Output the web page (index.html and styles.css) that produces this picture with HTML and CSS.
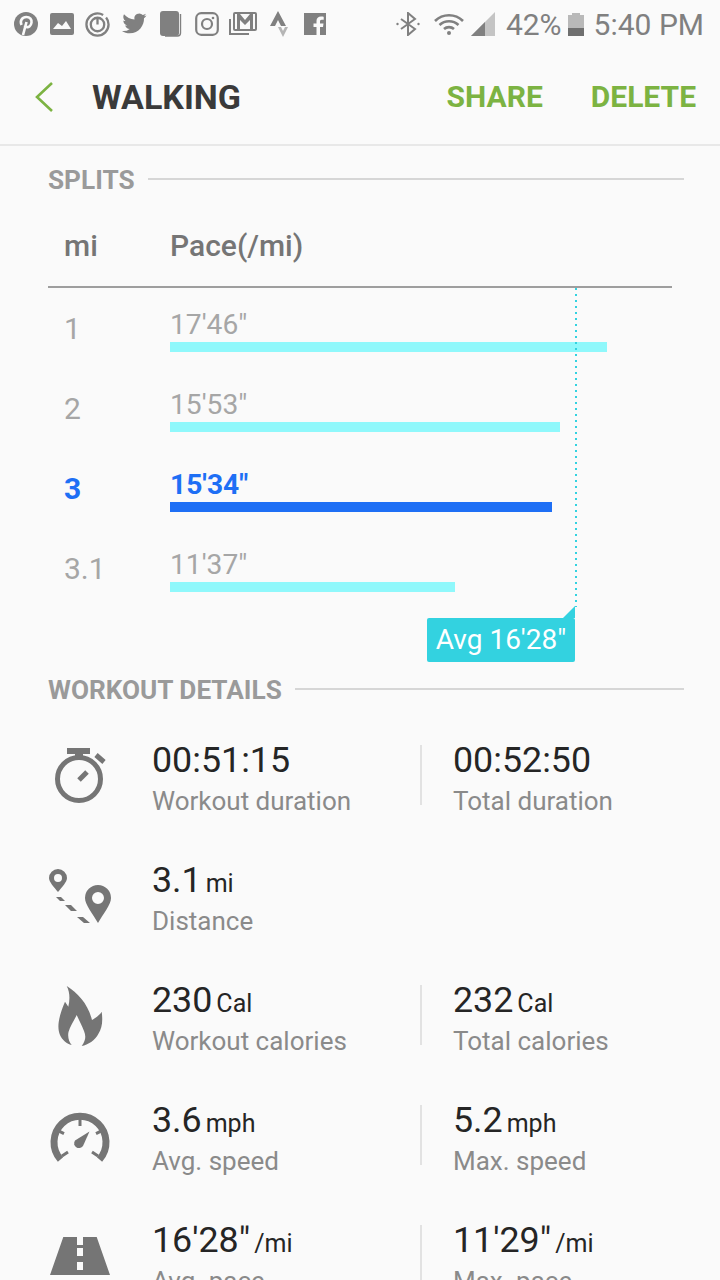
FILE: index.html
```html
<!DOCTYPE html>
<html lang="en">
  <head>
    <meta charset="UTF-8" />
    <meta name="viewport" content="width=device-width, initial-scale=1.0" />
    <title>Walking</title>
    <link rel="stylesheet" href="styles.css">
  </head>
  <body>
    <div class="status-bar">
      <div class="status-apps">
        <svg width="24" height="24" viewBox="0 0 24 24"><circle cx="12" cy="12" r="12" fill="#808080"/><path d="M9 23l3.500-13M7.500 13C5.500 8.500 8.500 5 12.300 5c3.700 0 5.700 2.500 5.200 5.600-.5 3.200-2.800 5-5 4.400-1-.3-1.600-.9-1.900-1.500" fill="none" stroke="#fafafa" stroke-width="2.600"/></svg>
        <svg width="24" height="24" viewBox="0 0 24 24"><rect y="1" width="24" height="22" rx="2" fill="#808080"/><path d="M3 17l5-6 4 3 4-5 5 8z" fill="#fafafa"/></svg>
        <svg width="25" height="25" viewBox="0 0 26 26"><circle cx="13" cy="13" r="11.500" fill="none" stroke="#808080" stroke-width="2.400" stroke-dasharray="60 4"/><circle cx="13" cy="13" r="7" fill="none" stroke="#808080" stroke-width="2.400"/><path d="M13 6v7" stroke="#808080" stroke-width="2.400"/></svg>
        <svg width="26" height="24" viewBox="0 0 26 24"><path d="M25.500 3.500c-.9.500-1.900.7-2.700.8 1-.6 1.700-1.500 2-2.500-1 .6-2 1-3 1.200A4.900 4.900 0 0 0 13.500 7.500C9.500 7.300 5.600 5.300 3 2.200 1.600 4.500 2.300 7.500 4.500 9c-.8 0-1.500-.2-2.200-.6 0 2.400 1.700 4.500 4 5-.7.200-1.500.2-2.200.1.600 2 2.500 3.400 4.600 3.400A10 10 0 0 1 1 19c2.200 1.400 4.900 2.300 7.700 2.300 9.300 0 14.600-7.900 14.300-15 1-.7 1.800-1.600 2.500-2.800z" fill="#808080"/></svg>
        <svg width="22" height="26" viewBox="0 0 22 26"><rect x="0" y="0" width="19" height="25" rx="3" fill="#808080"/><path d="M20.500 3v19q0 3-3 3H5" fill="none" stroke="#808080" stroke-width="1.400"/></svg>
        <svg width="24" height="24" viewBox="0 0 24 24"><rect x="1.200" y="1.200" width="21.600" height="21.600" rx="5" fill="none" stroke="#808080" stroke-width="2.200"/><circle cx="12" cy="12" r="5" fill="none" stroke="#808080" stroke-width="2.200"/><circle cx="18" cy="6" r="1.300" fill="#808080"/></svg>
        <svg width="28" height="24" viewBox="0 0 28 24"><rect x="5" y="1" width="22" height="17" rx="1" fill="none" stroke="#808080" stroke-width="2"/><path d="M1 7v15h19" fill="none" stroke="#808080" stroke-width="2"/><path d="M8 2v15h3V8l5 5 5-5v9h3V2h-3l-5 6-5-6z" fill="#808080"/></svg>
        <svg width="18" height="26" viewBox="0 0 18 26"><path d="M8 0l8 15h-5L8 9l-3 6H0z" fill="#808080"/><path d="M8 16h3l2 4 2-4h3l-5 10z" fill="#b5b5b5"/></svg>
        <svg width="22" height="22" viewBox="0 0 22 22"><path d="M0 0h22v22h-6v-8h3l.5-3.500H16V8.500c0-1 .4-1.700 1.700-1.700h2V3.700c-.4 0-1.500-.2-2.700-.2-2.700 0-4.500 1.600-4.500 4.600v2.400H9.500V14h3v8H0z" fill="#808080"/></svg>
      </div>
      <div class="status-right">
        <svg width="24" height="24" viewBox="0 0 24 24" class="s-bt"><path d="M5 7l14 10-7 6V1l7 6L5 17" fill="none" stroke="#808080" stroke-width="2"/><circle cx="1.500" cy="12" r="1.200" fill="#808080"/><circle cx="22.500" cy="12" r="1.200" fill="#808080"/></svg>
        <svg width="30" height="24" viewBox="0 0 30 24" class="s-wifi"><path d="M1 9a20 20 0 0 1 28 0M5.500 13a14 14 0 0 1 19 0M10 17a7.500 7.500 0 0 1 10 0" fill="none" stroke="#808080" stroke-width="2.600"/><circle cx="15" cy="21" r="2" fill="#808080"/></svg>
        <svg width="24" height="24" viewBox="0 0 24 24" class="s-signal"><path d="M24 0v24H0z" fill="#c4c4c4"/><path d="M14 10v14H0z" fill="#808080"/></svg>
        <span>42%</span>
        <span class="s-batt"><span class="s-batt-level"></span></span>
        <span>5:40 PM</span>
      </div>
    </div>

    <div class="top-bar">
      <svg class="back" width="20" height="32" viewBox="0 0 20 32"><path d="M19 2L4 16l15 14" fill="none" stroke="#7cb342" stroke-width="2.600"/></svg>
      <h1>WALKING</h1>
      <a class="action action-share">SHARE</a>
      <a class="action">DELETE</a>
    </div>

    <div class="section-head head-splits"><span>SPLITS</span><i></i></div>

    <div class="splits">
      <div class="splits-head"><span class="col-mi">mi</span><span>Pace(/mi)</span></div>

      <div class="split">
        <span class="col-mi">1</span>
        <div class="split-pace"><span>17'46"</span><div class="bar" style="width: 437px"></div></div>
      </div>
      <div class="split">
        <span class="col-mi">2</span>
        <div class="split-pace"><span>15'53"</span><div class="bar" style="width: 390px"></div></div>
      </div>
      <div class="split split-active">
        <span class="col-mi">3</span>
        <div class="split-pace"><span>15'34"</span><div class="bar" style="width: 382px"></div></div>
      </div>
      <div class="split">
        <span class="col-mi">3.1</span>
        <div class="split-pace"><span>11'37"</span><div class="bar" style="width: 285px"></div></div>
      </div>

      <div class="avg-line"></div>
      <div class="avg-tag">Avg 16'28"</div>
    </div>

    <div class="section-head"><span>WORKOUT DETAILS</span><i></i></div>

    <div class="details">
      <div class="detail">
        <div class="detail-icon">
          <svg width="60" height="60" viewBox="0 0 60 60"><path d="M19 2h23v6h-7v4h-8V8h-8z" fill="#757575"/><circle cx="31" cy="33" r="21.500" fill="none" stroke="#757575" stroke-width="5"/><path d="M48 9l8 7M31 34l8-8" fill="none" stroke="#757575" stroke-width="5"/></svg>
        </div>
        <div class="cell">
          <div class="value">00:51:15</div>
          <div class="label">Workout duration</div>
        </div>
        <div class="cell cell-second">
          <div class="value">00:52:50</div>
          <div class="label">Total duration</div>
        </div>
      </div>

      <div class="detail">
        <div class="detail-icon">
          <svg width="70" height="60" viewBox="0 0 70 60"><path fill-rule="evenodd" d="M10 3a9 9 0 0 1 9 9c0 4-5 9-9 14-4-5-9-10-9-14a9 9 0 0 1 9-9zm0 5a4 4 0 1 0 0 8 4 4 0 0 0 0-8z" fill="#757575"/><path fill-rule="evenodd" d="M50 19a13 13 0 0 1 13 13c0 7-8 16-13 25-5-9-13-18-13-25a13 13 0 0 1 13-13zm0 7a6 6 0 1 0 0 12 6 6 0 0 0 0-12z" fill="#757575"/><path d="M8 31h5l4 4h-5zM17 39h6l6 6h-6zM29 51h6l7 6h-6z" fill="#757575"/></svg>
        </div>
        <div class="cell">
          <div class="value">3.1<small>mi</small></div>
          <div class="label">Distance</div>
        </div>
      </div>

      <div class="detail">
        <div class="detail-icon">
          <svg width="60" height="72" viewBox="0 0 60 72"><path d="M18.700 6C30 13 40 24 44 40c3-2 8-5 9.700-8.300C55 42 54 48 50.300 54c-3 6-10.300 11-16.600 12 4.300-6 4.300-10 2.300-15-2-5-5-11-7.300-16-2.700 6-6.700 11-8.200 17-1 5 .5 10 3.200 13-4.700-1-9.700-5-11.700-10-3-7-2-17 5-33.300l3.300 5C22 20 22 12 18.700 6z" fill="#757575"/></svg>
        </div>
        <div class="cell">
          <div class="value">230<small>Cal</small></div>
          <div class="label">Workout calories</div>
        </div>
        <div class="cell cell-second">
          <div class="value">232<small>Cal</small></div>
          <div class="label">Total calories</div>
        </div>
      </div>

      <div class="detail">
        <div class="detail-icon">
          <svg width="64" height="60" viewBox="0 0 64 60"><path d="M12.500 53.500A26 26 0 1 1 51.500 53.500" fill="none" stroke="#757575" stroke-width="7"/><path d="M32 13v7M10 24.700l6 3M54 24.700l-6 3M14 50l6-4M50 50l-6-4" fill="none" stroke="#757575" stroke-width="3"/><path d="M41.500 25.500L35 40a4.800 4.800 0 0 1-8-5.500z" fill="#757575"/></svg>
        </div>
        <div class="cell">
          <div class="value">3.6<small>mph</small></div>
          <div class="label">Avg. speed</div>
        </div>
        <div class="cell cell-second">
          <div class="value">5.2<small>mph</small></div>
          <div class="label">Max. speed</div>
        </div>
      </div>

      <div class="detail">
        <div class="detail-icon">
          <svg width="64" height="40" viewBox="0 0 64 40"><path fill-rule="evenodd" d="M15.300 1H29v8h6V1h13.700L62 39H2zM29 12v8h6v-8zm0 14v8h6v-8z" fill="#757575"/></svg>
        </div>
        <div class="cell">
          <div class="value">16'28"<small>/mi</small></div>
          <div class="label">Avg. pace</div>
        </div>
        <div class="cell cell-second">
          <div class="value">11'29"<small>/mi</small></div>
          <div class="label">Max. pace</div>
        </div>
      </div>
    </div>
  </body>
</html>
```

FILE: styles.css
```css
/* General */
html,
body {
  height: 1280px;
  overflow: hidden;
}

body {
  margin: 0;
  background-color: #fafafa;
  font-family: Roboto, "Liberation Sans", sans-serif;
  color: #252525;
}

/* Status bar */
.status-bar {
  height: 48px;
  display: flex;
  align-items: center;
  justify-content: space-between;
  padding: 0 16px 0 14px;
  color: #808080;
}

.status-apps {
  display: flex;
  align-items: center;
  gap: 11px;
}

.status-apps svg:nth-child(2) {
  margin-left: 1px;
}

.status-apps svg:nth-child(5),
.status-apps svg:nth-child(6),
.status-apps svg:nth-child(8) {
  margin-left: 2px;
}

.status-apps svg:nth-child(7) {
  margin-left: -1px;
}

.status-apps svg:nth-child(9) {
  margin-left: 5px;
}

.status-right {
  display: flex;
  align-items: center;
  font-size: 30px;
}

.s-bt {
  margin-right: 14px;
}

.s-wifi {
  margin-right: 7px;
}

.s-signal {
  margin-right: 11px;
}

.s-batt {
  position: relative;
  width: 16px;
  height: 21px;
  margin: 3px 10px 0 6px;
  background: #b9b9b9;
  display: flex;
  align-items: flex-end;
}

.s-batt::before {
  content: "";
  position: absolute;
  left: 4px;
  top: -2px;
  width: 8px;
  height: 2px;
  background: #b9b9b9;
}

.s-batt-level {
  width: 100%;
  height: 8px;
  background: #6f6f6f;
}

/* Top bar */
.top-bar {
  height: 98px;
  box-sizing: border-box;
  display: flex;
  align-items: center;
  padding: 2px 24px 0 33px;
  border-bottom: 2px solid #e8e8e8;
}

.top-bar h1 {
  margin: 0 0 0 39px;
  font-size: 34px;
  font-weight: 700;
  color: #3a3a3a;
  flex: 1;
}

.action {
  font-size: 30px;
  font-weight: 700;
  color: #7cb342;
  margin-bottom: 2px;
}

.action-share {
  margin-right: 48px;
}

/* Section headings */
.section-head {
  display: flex;
  align-items: center;
  gap: 13px;
  height: 32px;
  margin: 0 36px 0 48px;
  font-size: 26.2px;
  font-weight: 700;
  color: #9a9a9a;
}

.section-head i {
  flex: 1;
  height: 2px;
  margin-bottom: 2px;
  background: #d6d6d6;
}

.head-splits {
  margin-top: 18px;
}

/* Splits */
.splits {
  position: relative;
  margin: 0 48px;
  height: 478px;
}

.splits-head {
  height: 92px;
  box-sizing: border-box;
  padding-top: 32px;
  line-height: 36px;
  display: flex;
  font-size: 30px;
  font-weight: 500;
  color: #757575;
  border-bottom: 2px solid #9e9e9e;
}

.col-mi {
  width: 122px;
  padding-left: 16px;
  box-sizing: border-box;
  flex-shrink: 0;
}

.split {
  height: 80px;
  display: flex;
  align-items: center;
  font-size: 30px;
  color: #a6a6a6;
}

.split-pace {
  align-self: flex-start;
  margin-top: 22px;
  font-size: 28.2px;
  line-height: 30px;
  display: flex;
  flex-direction: column;
  gap: 2px;
}

.bar {
  height: 10px;
  background: #8ff8fb;
}

.split-active {
  color: #1e6ff5;
  font-weight: 700;
}

.split-active .bar {
  background: #1e6ff5;
}

.avg-line {
  position: absolute;
  left: 527px;
  top: 92px;
  width: 2px;
  height: 319px;
  background: repeating-linear-gradient(to bottom, #33d2e0 0, #33d2e0 2px, transparent 2px, transparent 6px);
}

.avg-tag {
  position: absolute;
  left: 379px;
  top: 422px;
  width: 148px;
  height: 44px;
  line-height: 44px;
  text-align: center;
  font-size: 28px;
  color: #fff;
  background: #33d2e0;
  border-radius: 2px;
}

.avg-tag::before {
  content: "";
  position: absolute;
  right: 0;
  top: -12px;
  border-left: 12px solid transparent;
  border-bottom: 12px solid #33d2e0;
}

/* Workout details */
.details {
  padding-top: 30px;
}

.detail {
  height: 120px;
  display: flex;
  align-items: flex-start;
}

.detail-icon {
  width: 152px;
  height: 80px;
  padding-left: 48px;
  box-sizing: border-box;
  flex-shrink: 0;
  display: flex;
  align-items: center;
}

.cell {
  position: relative;
  width: 268px;
  flex-shrink: 0;
}

.cell-second {
  padding-left: 33px;
}

.cell-second::before {
  content: "";
  position: absolute;
  left: 0;
  top: 9px;
  width: 2px;
  height: 60px;
  background: #e2e2e2;
}

.value {
  font-size: 35.8px;
  line-height: 48px;
}

.value small {
  font-size: 25px;
  line-height: 1;
  margin-left: 4px;
}

.label {
  font-size: 26px;
  line-height: 34px;
  color: #8a8a8a;
}
```
